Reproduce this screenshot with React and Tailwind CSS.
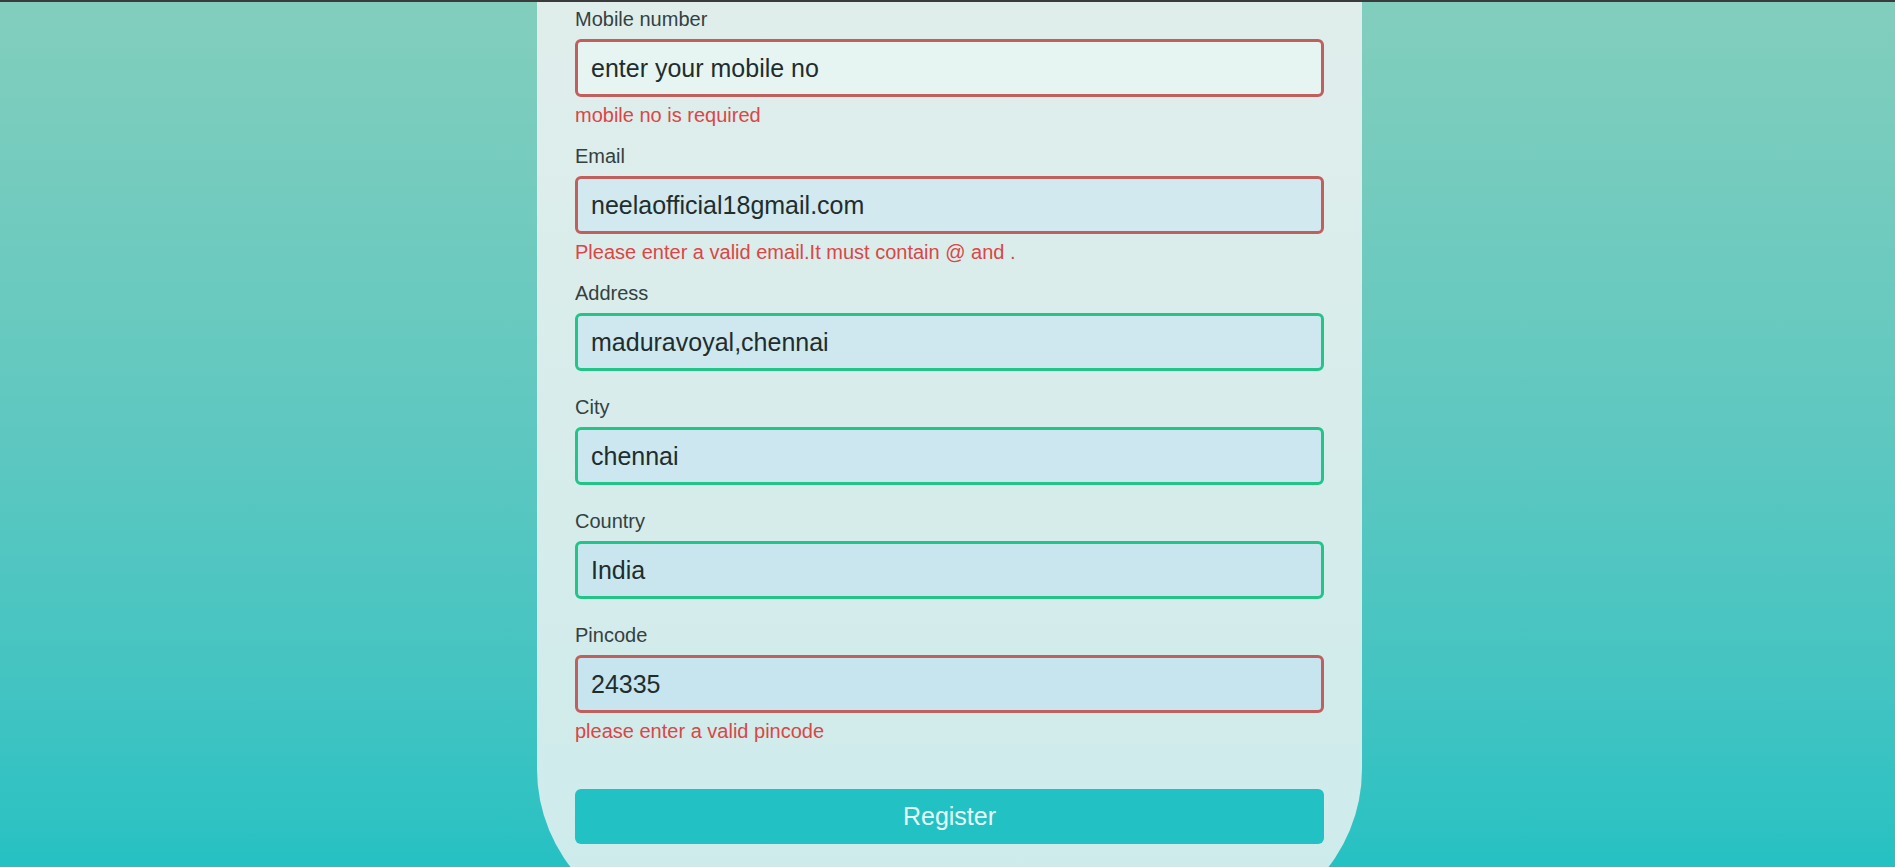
import { useState } from "react";

const fields = [
  { label: "Mobile number", value: "", placeholder: "enter your mobile no", error: "mobile no is required", bg: "bg-[#e6f5f2]", valid: false },
  { label: "Email", value: "neelaofficial18gmail.com", error: "Please enter a valid email.It must contain @ and .", bg: "bg-[#d2e9f0]", valid: false },
  { label: "Address", value: "maduravoyal,chennai", error: "", bg: "bg-[#cfe8f0]", valid: true },
  { label: "City", value: "chennai", error: "", bg: "bg-[#cce7f0]", valid: true },
  { label: "Country", value: "India", error: "", bg: "bg-[#c9e6ef]", valid: true },
  { label: "Pincode", value: "24335", error: "please enter a valid pincode", bg: "bg-[#c6e5ef]", valid: false },
];

function Field({ field, value, onChange }) {
  return (
    <div className="flex flex-col pb-[18px]">
      <label className="block text-[20px] leading-[23px] text-[#34413f]">{field.label}</label>
      <input
        type="text"
        value={value}
        placeholder={field.placeholder}
        onChange={(event) => onChange(event.target.value)}
        className={`mt-[8px] block h-[58px] w-full rounded-[6px] border-[3px] pl-[13px] text-[25px] text-[#1f2d2d] outline-none placeholder:text-[#1f2d2d] ${field.bg} ${
          field.valid ? "border-[#22c587]" : "border-[#c05f5c]"
        }`}
      />
      <p className="pt-[7px] text-[20px] leading-[23px] text-[#db4646]">{field.error}</p>
    </div>
  );
}

export default function App() {
  const [form, setForm] = useState(fields.map((field) => field.value));

  return (
    <div className="h-[867px] overflow-hidden bg-gradient-to-b from-[#82cebd] to-[#25c1c3] font-['Liberation_Sans',Arial,sans-serif]">
      <div className="h-[2px] bg-[#3b3b3b]" />
      <div className="pl-[4px]">
        <div className="mx-auto w-[825px] rounded-b-[160px] bg-gradient-to-b from-[#e0eeeb] to-[#cdebeb] px-[38px] pb-[85px] pt-[6px]">
          <form onSubmit={(event) => event.preventDefault()}>
            {fields.map((field, index) => (
              <Field
                key={field.label}
                field={field}
                value={form[index]}
                onChange={(value) => setForm((current) => current.map((item, i) => (i === index ? value : item)))}
              />
            ))}
            <button
              type="submit"
              className="mt-[28px] block h-[55px] w-full rounded-[6px] bg-[#22c1c3] text-[25px] text-[#e8f8f7]"
            >
              Register
            </button>
          </form>
        </div>
      </div>
    </div>
  );
}
